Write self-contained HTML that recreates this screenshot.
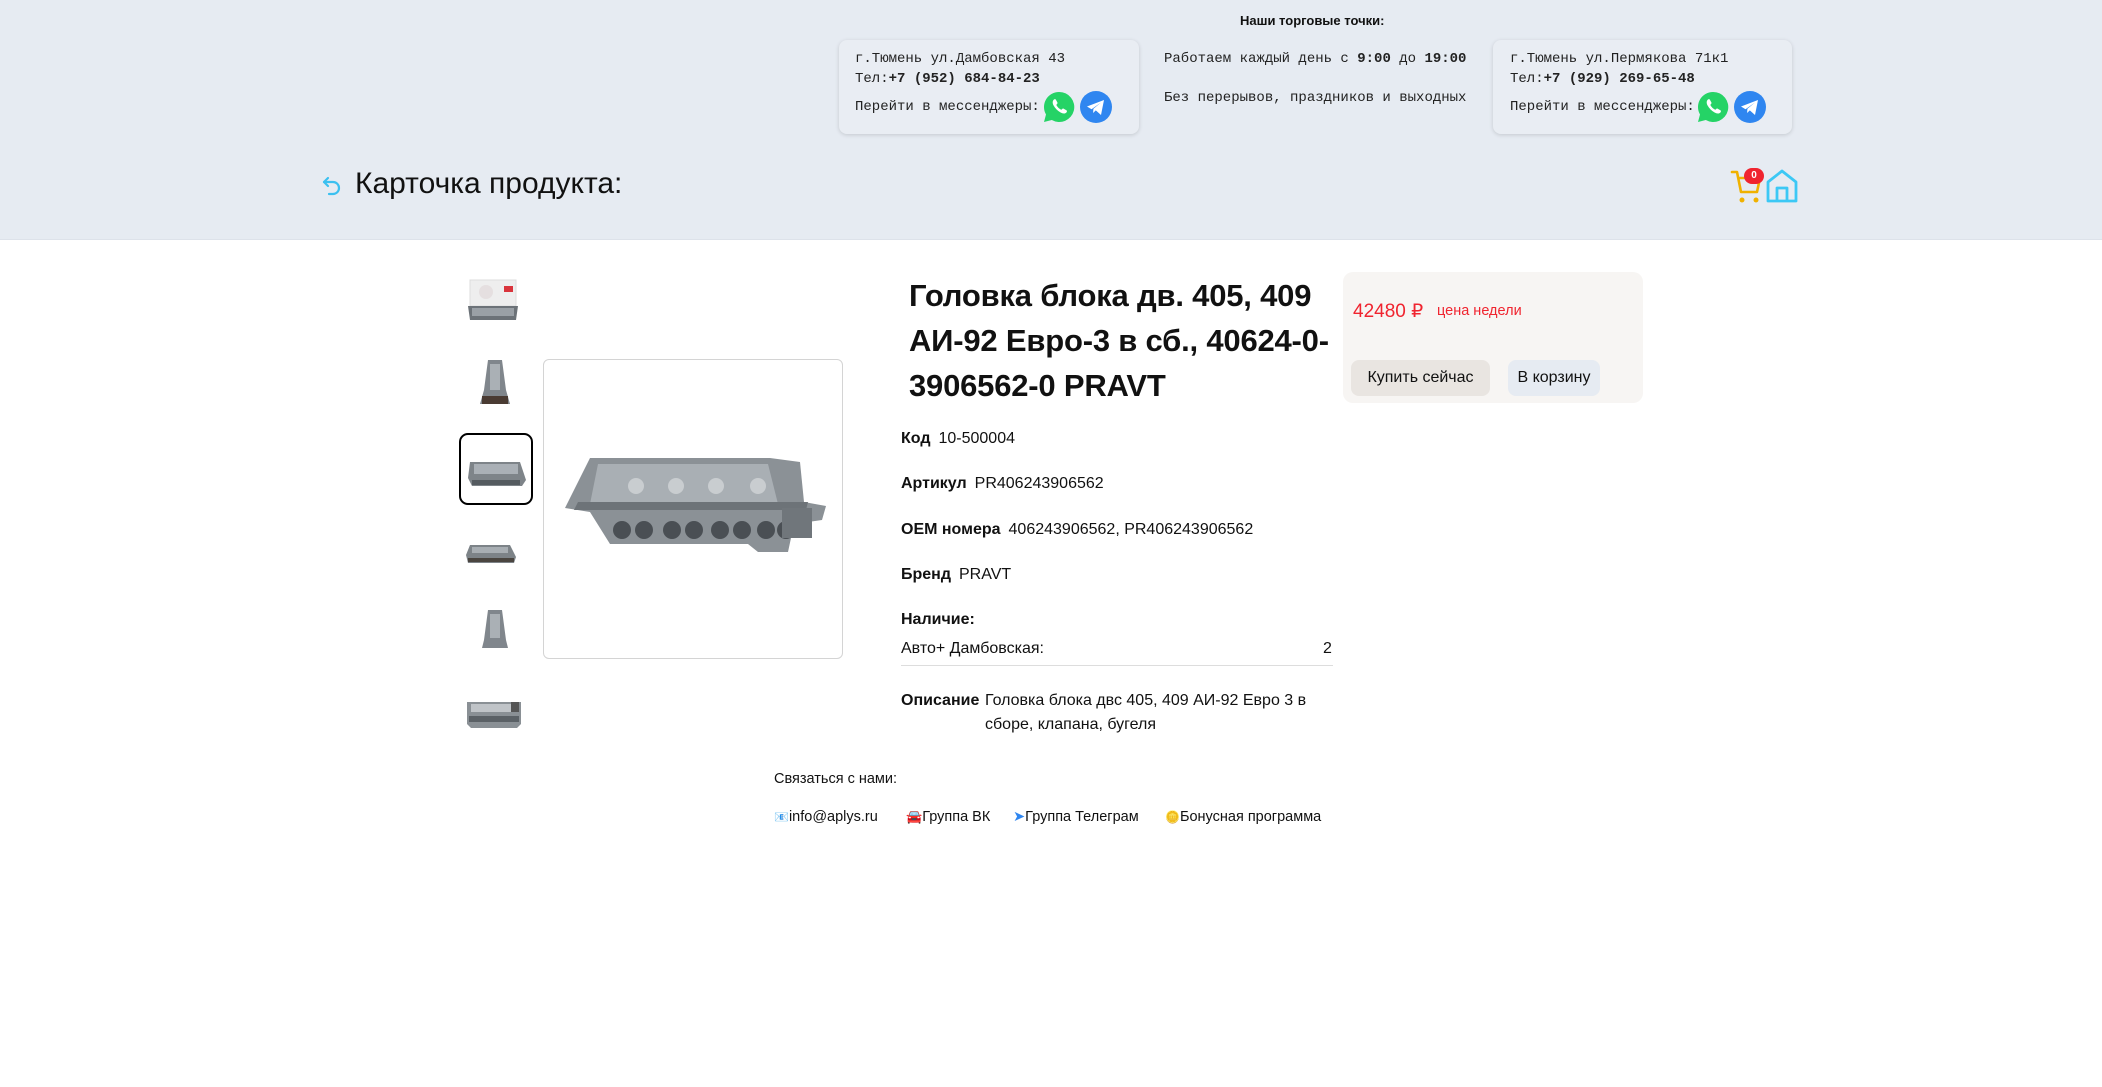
<!DOCTYPE html>
<html><head><meta charset="utf-8"><style>
*{margin:0;padding:0;box-sizing:border-box}
body{width:2102px;height:1087px;background:#fff;font-family:"Liberation Sans","DejaVu Sans",sans-serif;color:#111;position:relative;overflow:hidden}
.abs{position:absolute}
.hdr{position:absolute;left:0;top:0;width:2102px;height:240px;background:#e6ebf2;border-bottom:1px solid #dde2ea}
.mono{font-family:"Liberation Mono",monospace;font-size:14px;color:#222;white-space:nowrap}
.card{position:absolute;background:#e9edf3;border-radius:8px;box-shadow:0 1px 4px rgba(0,0,0,.15)}
.ic{position:absolute;width:32px;height:32px}
.lbl{font-weight:bold;margin-right:8px}
.row{position:absolute;left:901px;font-size:16px;white-space:nowrap}
.ft{position:absolute;top:809px;font-size:14.5px;white-space:nowrap;color:#111}
</style></head><body>
<div class="hdr"></div>
<div class="abs" style="left:1240px;top:13px;font-size:13px;font-weight:bold">Наши торговые точки:</div>

<div class="card" style="left:839px;top:40px;width:300px;height:94px"></div>
<div class="abs mono" style="left:855px;top:51px">г.Тюмень ул.Дамбовская 43</div>
<div class="abs mono" style="left:855px;top:71px">Тел:<b>+7 (952) 684-84-23</b></div>
<div class="abs mono" style="left:855px;top:99px">Перейти в мессенджеры:</div>
<svg class="ic" style="left:1043px;top:91px" viewBox="0 0 32 32"><path d="M16 1a15 15 0 0 0-13 22.5L1 31l7.8-2A15 15 0 1 0 16 1z" fill="#25d366"/><path d="M11 8.5c.6-.5 1.5-.5 1.9.2l1.5 2.8c.3.6 0 1.2-.5 1.6-.6.5-.6 1 0 1.9a11 11 0 0 0 3.4 3.3c.8.5 1.3.4 1.7-.1.5-.6 1.1-.8 1.7-.5l2.7 1.5c.7.4.7 1.4.2 2-1.5 1.7-3.6 1.6-6 .3a18 18 0 0 1-7-7c-1.3-2.5-1.2-4.6.4-6z" fill="#fff"/></svg>
<svg class="ic" style="left:1080px;top:91px" viewBox="0 0 32 32"><circle cx="16" cy="16" r="16" fill="#2f86f0"/><path d="M7 15.5 24 9l-3 15-5.2-4.6-2.7 2.6.3-4.2L21 11.5l-9.5 6.8z" fill="#fff"/></svg>

<div class="abs mono" style="left:1164px;top:51px">Работаем каждый день с <b>9:00</b> до <b>19:00</b></div>
<div class="abs mono" style="left:1164px;top:90px">Без перерывов, праздников и выходных</div>

<div class="card" style="left:1493px;top:40px;width:299px;height:94px"></div>
<div class="abs mono" style="left:1510px;top:51px">г.Тюмень ул.Пермякова 71к1</div>
<div class="abs mono" style="left:1510px;top:71px">Тел:<b>+7 (929) 269-65-48</b></div>
<div class="abs mono" style="left:1510px;top:99px">Перейти в мессенджеры:</div>
<svg class="ic" style="left:1697px;top:91px" viewBox="0 0 32 32"><path d="M16 1a15 15 0 0 0-13 22.5L1 31l7.8-2A15 15 0 1 0 16 1z" fill="#25d366"/><path d="M11 8.5c.6-.5 1.5-.5 1.9.2l1.5 2.8c.3.6 0 1.2-.5 1.6-.6.5-.6 1 0 1.9a11 11 0 0 0 3.4 3.3c.8.5 1.3.4 1.7-.1.5-.6 1.1-.8 1.7-.5l2.7 1.5c.7.4.7 1.4.2 2-1.5 1.7-3.6 1.6-6 .3a18 18 0 0 1-7-7c-1.3-2.5-1.2-4.6.4-6z" fill="#fff"/></svg>
<svg class="ic" style="left:1734px;top:91px" viewBox="0 0 32 32"><circle cx="16" cy="16" r="16" fill="#2f86f0"/><path d="M7 15.5 24 9l-3 15-5.2-4.6-2.7 2.6.3-4.2L21 11.5l-9.5 6.8z" fill="#fff"/></svg>

<svg class="abs" style="left:320px;top:174px" width="24" height="24" viewBox="0 0 24 24" fill="none" stroke="#3cc0f0" stroke-width="2.2" stroke-linecap="round" stroke-linejoin="round"><path d="M8 4 4 8l4 4"/><path d="M4 8h9a6 6 0 0 1 0 12H9"/></svg>
<div class="abs" style="left:355px;top:167px;font-size:30px;color:#111">Карточка продукта:</div>

<svg class="abs" style="left:1730px;top:168px" width="32" height="38" viewBox="0 0 32 38" fill="none" stroke="#f0b100" stroke-width="2.6" stroke-linejoin="round" stroke-linecap="round"><path d="M2 4h5l4 20h16l3-14H10"/><circle cx="12" cy="32" r="2.5" fill="#f0b100" stroke="none"/><circle cx="26" cy="32" r="2.5" fill="#f0b100" stroke="none"/></svg>
<div class="abs" style="left:1744px;top:168px;width:20px;height:16px;border-radius:8px;background:#f0242f;color:#fff;font-size:10px;font-weight:bold;text-align:center;line-height:16px">0</div>
<svg class="abs" style="left:1765px;top:168px" width="34" height="36" viewBox="0 0 34 36" fill="none" stroke="#3cc8f5" stroke-width="2.8" stroke-linejoin="round"><path d="M3 14 17 3l14 11v19H3z"/><path d="M12 33V20h10v13"/></svg>

<!-- thumbnails -->
<svg class="abs" style="left:464px;top:278px" width="58" height="50" viewBox="0 0 58 50"><rect x="6" y="2" width="46" height="26" fill="#eeeeee" stroke="#ddd"/><rect x="40" y="8" width="9" height="6" fill="#d9343c"/><circle cx="22" cy="14" r="7" fill="#e5dfe0"/><path d="M4 28h50l-2 14H6z" fill="#6c7278"/><path d="M8 30h42v8H8z" fill="#9aa0a6"/></svg>
<svg class="abs" style="left:476px;top:358px" width="38" height="50" viewBox="0 0 38 50"><path d="M12 2h14l4 30 4 14H4l4-14z" fill="#80868c"/><path d="M14 6h10v26H14z" fill="#aab0b5"/><path d="M6 38h26v8H6z" fill="#4a3b33"/></svg>
<div class="abs" style="left:459px;top:433px;width:74px;height:72px;border:2px solid #000;border-radius:9px"></div>
<svg class="abs" style="left:466px;top:456px" width="62" height="34" viewBox="0 0 62 34"><path d="M4 6h50l6 18-4 6H6L2 22z" fill="#7e8489"/><path d="M8 8h44v10H8z" fill="#aab0b6"/><path d="M6 24h48v5H6z" fill="#555b60"/></svg>
<svg class="abs" style="left:464px;top:542px" width="54" height="24" viewBox="0 0 54 24"><path d="M6 3h40l6 12-2 6H4L2 13z" fill="#7d8388"/><path d="M8 5h36v6H8z" fill="#a8aeb3"/><path d="M4 16h46v4H4z" fill="#4a4540"/></svg>
<svg class="abs" style="left:476px;top:608px" width="38" height="44" viewBox="0 0 38 44"><path d="M12 2h14l4 30 2 8H6l2-8z" fill="#80868c"/><path d="M14 6h10v24H14z" fill="#aab0b5"/></svg>
<svg class="abs" style="left:463px;top:698px" width="62" height="32" viewBox="0 0 62 32"><path d="M4 4h54v22l-4 4H8l-4-4z" fill="#8a9095"/><path d="M8 6h40v8H8z" fill="#c0c4c8"/><rect x="48" y="4" width="8" height="10" fill="#555"/><path d="M6 18h50v6H6z" fill="#5b6166"/></svg>

<!-- main image -->
<div class="abs" style="left:543px;top:359px;width:300px;height:300px;border:1px solid #d4d4d4;border-radius:6px"></div>
<svg class="abs" style="left:560px;top:450px" width="270" height="110" viewBox="0 0 270 110"><path d="M30 8h180l30 4 4 40 22 4-4 14-28 4-6 28h-30l-10-8H50L30 62 5 58z" fill="#8b9196"/><path d="M38 14h170l10 40H30z" fill="#a9afb4"/><path d="M18 52h230l-2 8H14z" fill="#6d7378"/><g fill="#4a4f54"><circle cx="62" cy="80" r="9"/><circle cx="84" cy="80" r="9"/><circle cx="112" cy="80" r="9"/><circle cx="134" cy="80" r="9"/><circle cx="160" cy="80" r="9"/><circle cx="182" cy="80" r="9"/><circle cx="206" cy="80" r="9"/><circle cx="226" cy="80" r="9"/></g><g fill="#c9cdd0"><circle cx="76" cy="36" r="8"/><circle cx="116" cy="36" r="8"/><circle cx="156" cy="36" r="8"/><circle cx="198" cy="36" r="8"/></g><path d="M222 58h30v30h-30z" fill="#70767b"/></svg>

<!-- title -->
<div class="abs" style="left:909px;top:273px;font-size:31px;font-weight:bold;line-height:45px;color:#111;letter-spacing:-.2px">Головка блока дв. 405, 409<br>АИ-92 Евро-3 в сб., 40624-0-<br>3906562-0 PRAVT</div>

<div class="row" style="top:430px"><span class="lbl">Код</span>10-500004</div>
<div class="row" style="top:475px"><span class="lbl">Артикул</span>PR406243906562</div>
<div class="row" style="top:521px"><span class="lbl">OEM номера</span>406243906562, PR406243906562</div>
<div class="row" style="top:566px"><span class="lbl">Бренд</span>PRAVT</div>
<div class="row" style="top:611px"><span class="lbl">Наличие:</span></div>
<div class="row" style="top:640px">Авто+ Дамбовская:</div>
<div class="abs" style="left:1323px;top:640px;font-size:16px">2</div>
<div class="abs" style="left:901px;top:665px;width:432px;height:1px;background:#ddd"></div>
<div class="row" style="top:689px;line-height:24px"><span class="lbl">Описание</span></div>
<div class="abs" style="left:985px;top:689px;font-size:16px;line-height:24px;width:340px">Головка блока двс 405, 409 АИ-92 Евро 3 в сборе, клапана, бугеля</div>

<!-- price box -->
<div class="abs" style="left:1343px;top:272px;width:300px;height:131px;background:#f7f5f3;border-radius:10px"></div>
<div class="abs" style="left:1353px;top:300px;font-size:19px;color:#f0242f">42480 ₽</div>
<div class="abs" style="left:1437px;top:303px;font-size:14.5px;color:#f0242f">цена недели</div>
<div class="abs" style="left:1351px;top:360px;width:139px;height:36px;background:#e9e5e1;border-radius:8px;font-size:16px;text-align:center;line-height:36px">Купить сейчас</div>
<div class="abs" style="left:1508px;top:360px;width:92px;height:36px;background:#e6ebf2;border-radius:8px;font-size:16px;text-align:center;line-height:36px">В корзину</div>

<!-- footer -->
<div class="abs" style="left:774px;top:771px;font-size:14.5px">Связаться с нами:</div>
<div class="ft" style="left:774px"><span style="color:#3a7bd5;font-size:12px">📧</span>info@aplys.ru</div>
<div class="ft" style="left:906px"><span style="color:#d33;font-size:13px">🚘</span>Группа ВК</div>
<div class="ft" style="left:1013px"><span style="color:#2f86f0">➤</span>Группа Телеграм</div>
<div class="ft" style="left:1165px"><span style="color:#d9a440;font-size:12px">🪙</span>Бонусная программа</div>
</body></html>
